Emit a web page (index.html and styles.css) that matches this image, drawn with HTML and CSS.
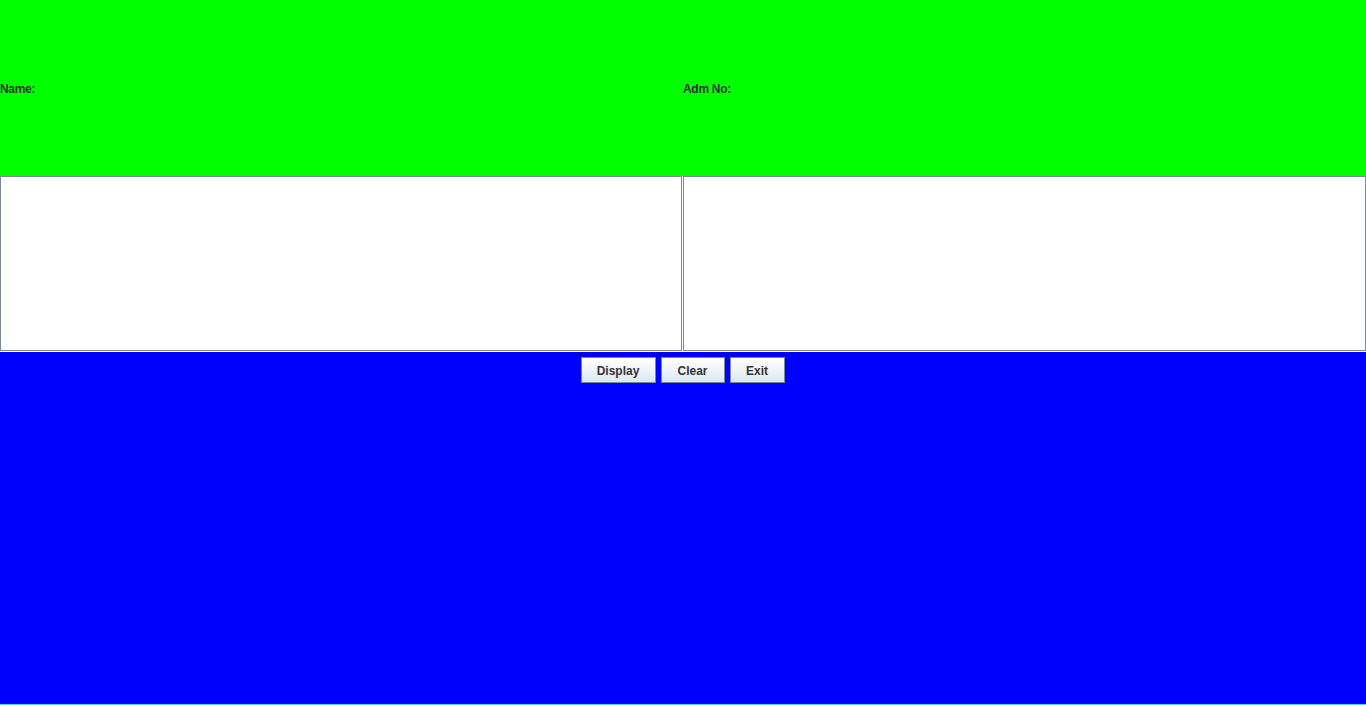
FILE: index.html
```html
<!DOCTYPE html>
<html>
<head>
<meta charset="utf-8">
<link rel="stylesheet" href="styles.css">
</head>
<body>
<div class="frame">
  <div class="top">
    <div class="lbl">Name:</div>
    <div class="lbl">Adm No:</div>
  </div>
  <div class="mid">
    <div class="area"></div>
    <div class="area"></div>
  </div>
  <div class="bottom">
    <button class="btn btn-display">Display</button>
    <button class="btn btn-clear">Clear</button>
    <button class="btn btn-exit">Exit</button>
  </div>
  <div class="edge"></div>
</div>
</body>
</html>
```
FILE: styles.css
```css
html, body {
  margin: 0;
  padding: 0;
  width: 1366px;
  height: 705px;
  overflow: hidden;
  background: #0000ff;
}
.frame {
  display: flex;
  flex-direction: column;
  width: 1366px;
  height: 705px;
}
.top {
  height: 176px;
  background: #00ff00;
  display: grid;
  grid-template-columns: 683px 683px;
  align-items: center;
}
.lbl {
  font-family: "Liberation Sans", Arial, sans-serif;
  font-weight: bold;
  font-size: 12px;
  letter-spacing: -0.3px;
  color: #333333;
  line-height: 14px;
  padding-top: 2px;
}
.mid {
  height: 176px;
  background: #ffffff;
  display: grid;
  grid-template-columns: 682px 683px;
  column-gap: 1px;
}
.area {
  background: #ffffff;
  border: 1px solid #7a8a99;
  box-sizing: border-box;
  height: 175px;
}
.bottom {
  flex: 1;
  background: #0000ff;
  display: flex;
  justify-content: center;
  align-items: flex-start;
  gap: 5px;
  padding-top: 5px;
  padding-right: 1px;
}
.btn {
  height: 26px;
  box-sizing: border-box;
  border: 1px solid #7a8a99;
  background: linear-gradient(to bottom, #ffffff 0%, #f3f7fb 35%, #dce7f2 100%);
  font-family: "Liberation Sans", Arial, sans-serif;
  font-weight: bold;
  font-size: 12px;
  color: #333333;
  padding: 2px 0 0 0;
  margin: 0;
}
.btn-display { width: 75px; }
.btn-clear { width: 64px; }
.btn-exit { width: 55px; }
.edge {
  height: 1px;
  background: #00ffff;
}
```
